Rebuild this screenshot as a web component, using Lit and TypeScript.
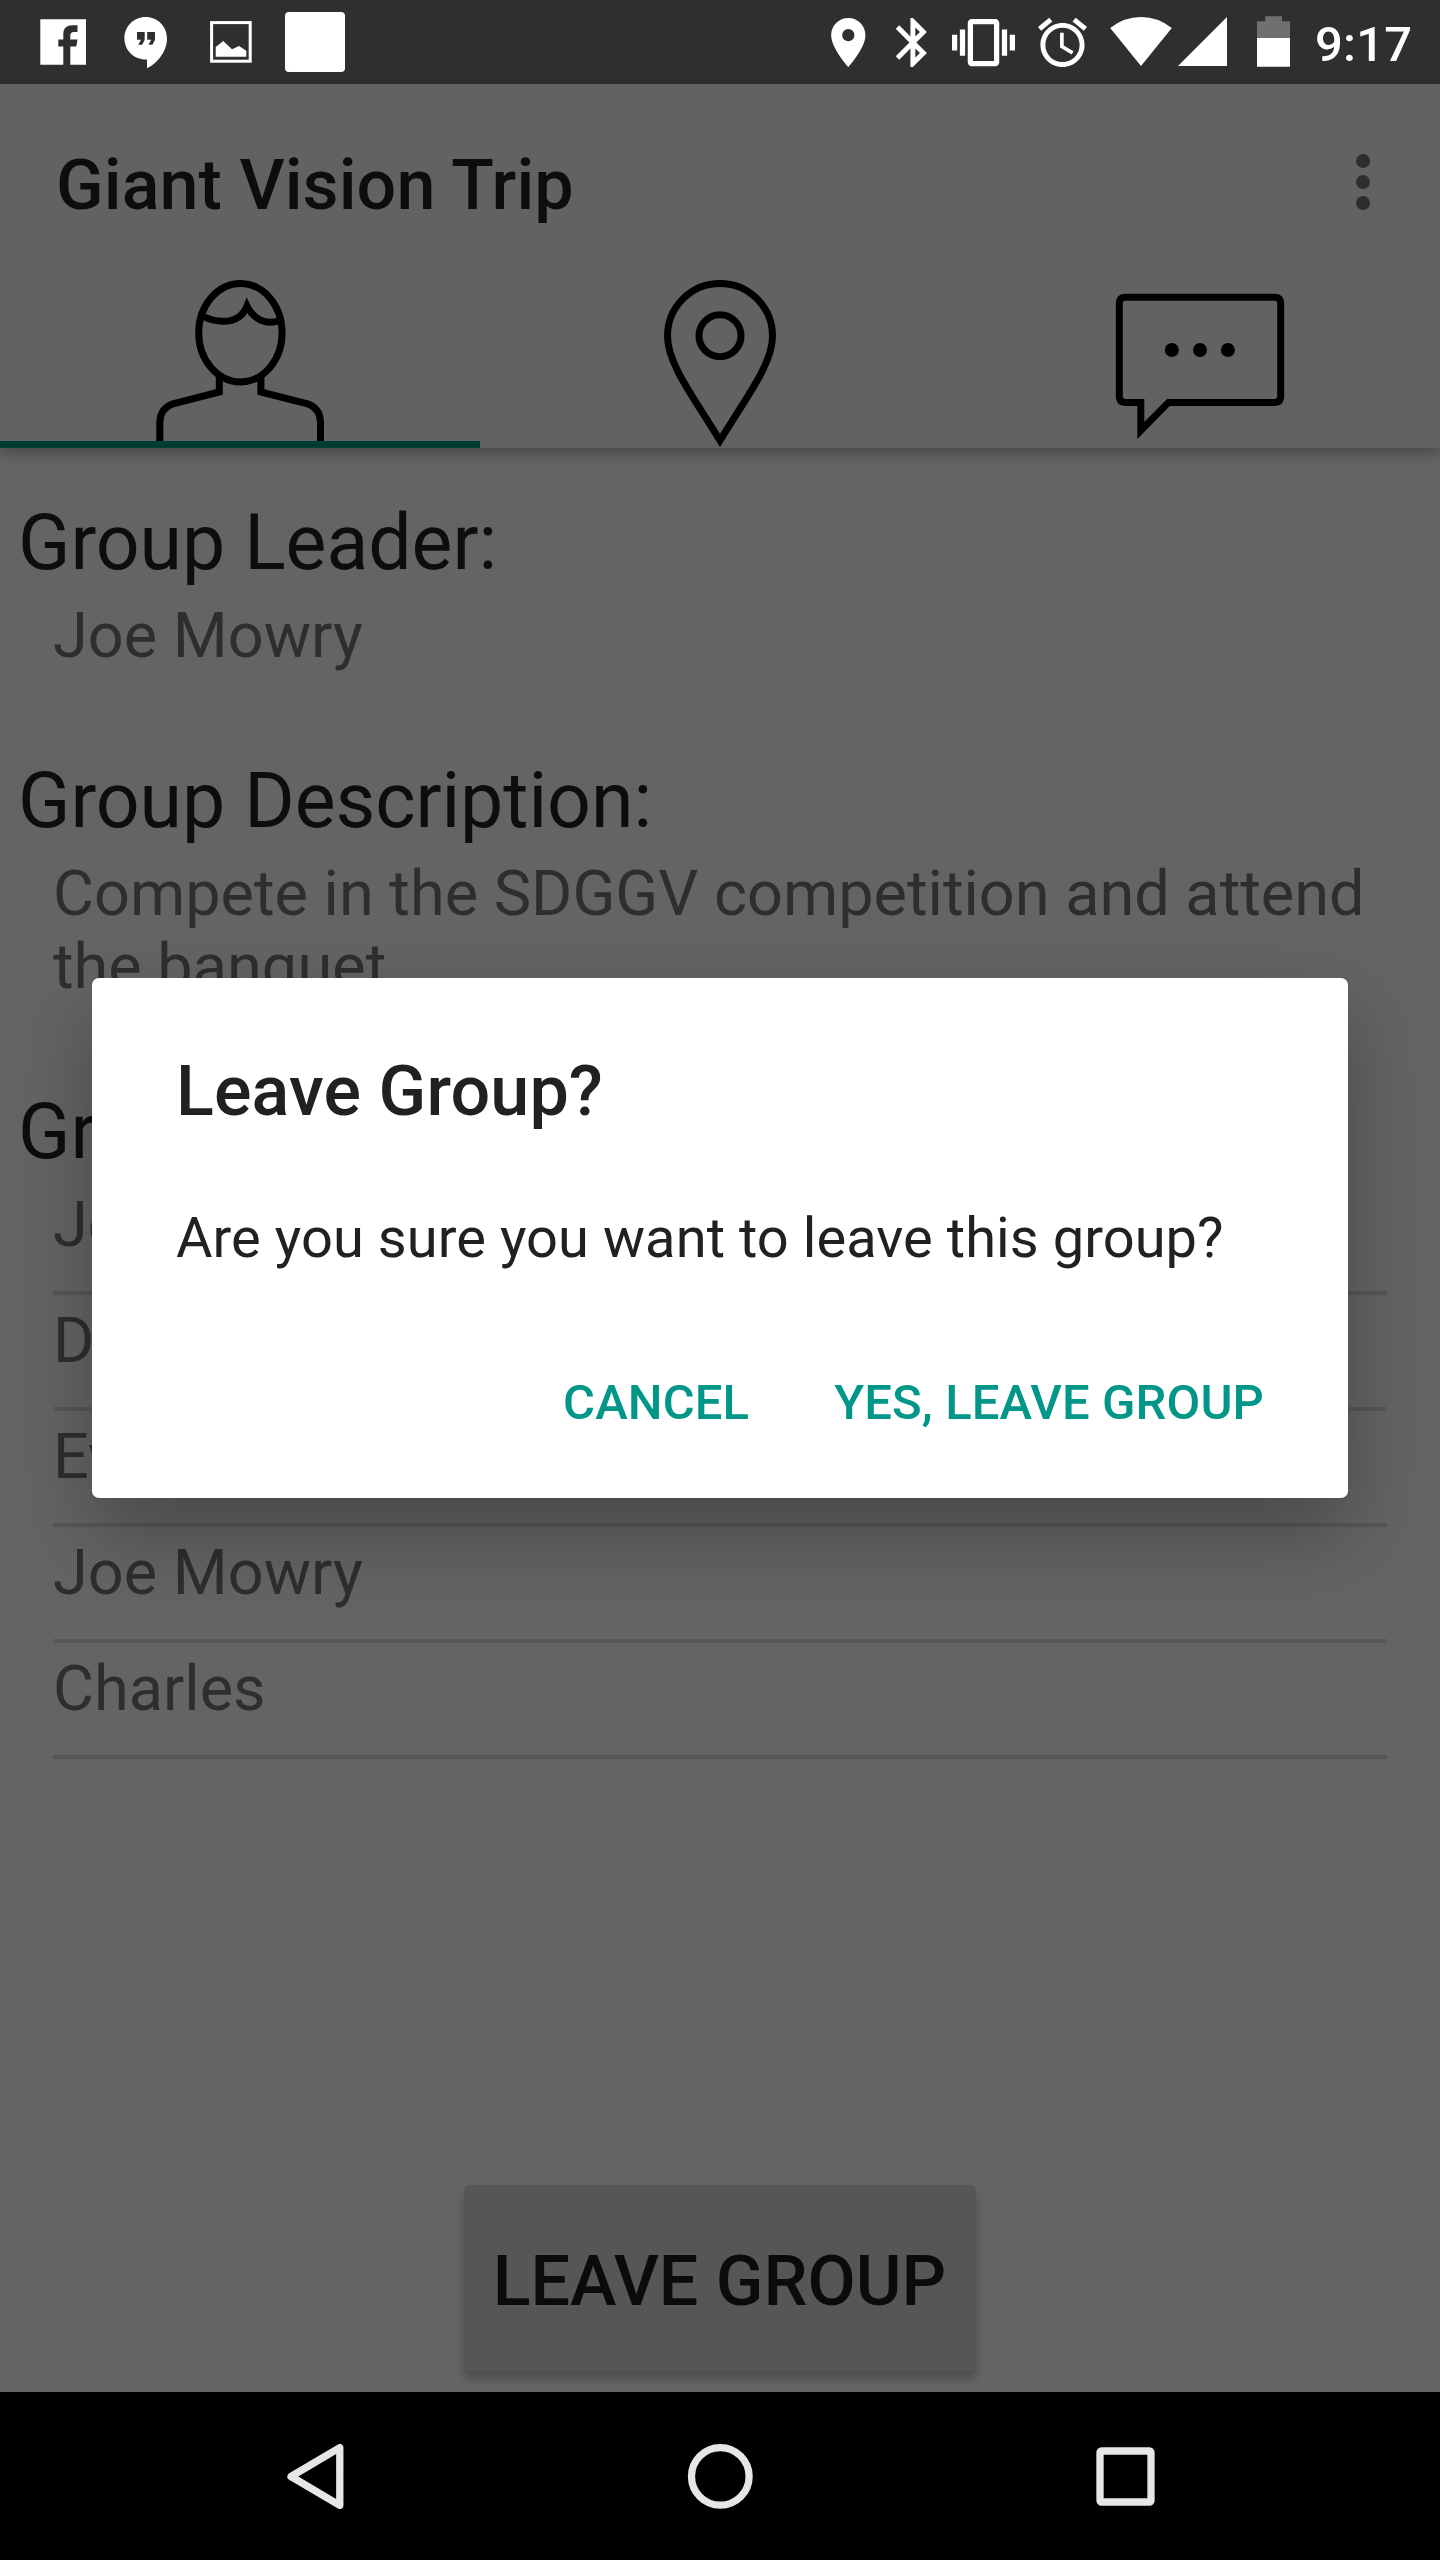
import { LitElement, html, svg, css } from "lit";
import type { SVGTemplateResult } from "lit";
import { customElement } from "lit/decorators.js";
import { classMap } from "lit/directives/class-map.js";

interface StatusIcon {
  name: string;
  x: number;
  width: number;
  art: SVGTemplateResult;
}

const NOTIFICATIONS: StatusIcon[] = [
  {
    name: "facebook", x: 40, width: 46,
    art: svg`<path d="M40.3 19.3H86V64.7H70.3V46.5H76.3L77.5 39.5H70.3V35.5Q70.3 32 74 32H77.5V25.2H72C66 25.2 63.3 29 63.3 34V39.5H58.3V46.5H63.3V64.7H40.3Z"/>`,
  },
  {
    name: "hangouts", x: 124, width: 44,
    art: svg`<path fill-rule="evenodd" d="M145.7 17C157.7 17 167 26.5 167 38.5C167 51.5 157 63.5 147 68.3V59.6H145.7C133.7 59.6 124.4 50 124.4 38.3C124.4 26.5 133.7 17 145.7 17ZM137 32V39.7H141L138.3 44.7H142.2L144.7 39.7V32ZM147.2 32V39.7H151.2L148.5 44.7H152.4L155 39.7V32Z"/>`,
  },
  {
    name: "picture", x: 210, width: 42,
    art: svg`<rect x="211.6" y="22.6" width="38.6" height="38.6" fill="none" stroke="#fff" stroke-width="3"/><path d="M215.7 47L223.3 41L232 49.3L239 46L246.3 50.7V56.7H215.7Z"/>`,
  },
  {
    name: "square", x: 285, width: 60,
    art: svg`<rect x="285" y="12" width="60" height="60" rx="4"/>`,
  },
];

const SYSTEM: StatusIcon[] = [
  {
    name: "location", x: 831, width: 35,
    art: svg`<path transform="translate(818.9 13.1) scale(2.45)" d="M12 2C8.13 2 5 5.13 5 9c0 5.25 7 13 7 13s7-7.75 7-13c0-3.87-3.13-7-7-7zm0 9.5a2.5 2.5 0 1 1 0-5 2.5 2.5 0 0 1 0 5z"/>`,
  },
  {
    name: "bluetooth", x: 895, width: 32,
    art: svg`<path transform="translate(883.5 13.1) scale(2.45)" d="M17.71 7.71L12 2h-1v7.59L6.41 5 5 6.41 10.59 12 5 17.59 6.41 19 11 14.41V22h1l5.71-5.71-4.3-4.29 4.3-4.29zM13 5.83l1.88 1.88L13 9.59V5.83zm1.88 10.46L13 18.17v-3.76l1.88 1.88z"/>`,
  },
  {
    name: "vibrate", x: 952, width: 63,
    art: svg`<path transform="translate(952 11.1) scale(2.625)" d="M0 15h2V9H0v6zm3 2h2V7H3v10zm19-8v6h2V9h-2zm-3 8h2V7h-2v10zM16.5 3h-9C6.67 3 6 3.67 6 4.5v15c0 .83.67 1.5 1.5 1.5h9c.83 0 1.5-.67 1.5-1.5v-15c0-.83-.67-1.5-1.5-1.5zM16 19H8V5h8v14z"/>`,
  },
  {
    name: "alarm", x: 1038, width: 49,
    art: svg`<path transform="translate(1033.1 13.1) scale(2.45)" d="M22 5.72l-4.6-3.86-1.29 1.53 4.6 3.86L22 5.72zM7.88 3.39L6.6 1.86 2 5.71l1.29 1.53 4.59-3.85zM12.5 8H11v6l4.75 2.85.75-1.23-4-2.37V8zM12 4c-4.97 0-9 4.03-9 9s4.02 9 9 9c4.97 0 9-4.03 9-9s-4.03-9-9-9zm0 16c-3.87 0-7-3.13-7-7s3.13-7 7-7 7 3.13 7 7-3.13 7-7 7z"/>`,
  },
  {
    name: "wifi", x: 1110, width: 62,
    art: svg`<path d="M1110.2 28Q1124 17 1141 17T1171.8 28L1141 66Z"/>`,
  },
  {
    name: "signal", x: 1178, width: 49,
    art: svg`<path d="M1178 66L1227 17V66Z"/>`,
  },
  {
    name: "battery", x: 1257, width: 33,
    art: svg`<path fill="#707070" d="M1257 21.3H1265.3V16.2H1282V21.3H1290V39H1257Z"/><path d="M1257 38H1290V66.7H1257Z"/>`,
  },
];

const TABS: { name: string; active: boolean; art: SVGTemplateResult }[] = [
  {
    name: "members", active: true,
    art: svg`
      <ellipse cx="240.4" cy="52.7" rx="41.7" ry="49.2"/>
      <path d="M202.5 36C209 39.5 216 41.3 223.6 41.3C235 41.3 243 36 247 26C251.5 35 259.5 42.3 270.5 42.3Q275 42.3 279.5 40.5"/>
      <path d="M219.3 96V112L173 123.8C164 127 159.8 134 159.8 143V168"/>
      <path d="M260.9 96V112L307.5 123.8C316.5 127 320.5 134 320.5 143V168"/>`,
  },
  {
    name: "map", active: false,
    art: svg`
      <path d="M240 160.5C213 116 187.5 84 187.5 56A52.5 52.5 0 0 1 292.5 56C292.5 84 267 116 240 160.5Z"/>
      <circle cx="240" cy="55.7" r="21"/>`,
  },
  {
    name: "chat", active: false,
    art: svg`
      <path d="M180.8 122.4H165.5Q159.3 122.4 159.3 116.2V23.4Q159.3 17.2 165.5 17.2H314.5Q320.7 17.2 320.7 23.4V116.2Q320.7 122.4 314.5 122.4H208.5L180.8 150.5Z"/>
      <g fill="#000" stroke="none"><circle cx="211.8" cy="70" r="7"/><circle cx="240" cy="70" r="7"/><circle cx="267.9" cy="70" r="7"/></g>`,
  },
];

const MEMBERS = ["John", "David", "Evan", "Joe Mowry", "Charles"];

@customElement("status-bar")
class StatusBar extends LitElement {
  static styles = css`
    :host { display: flex; height: 84px; background: #2f2f2f; color: #fff; }
    .icon { flex: none; display: block; fill: #fff; }
    .time { margin-left: 25px; padding-top: 16px; font-size: 49px; line-height: 57px; font-weight: 500; letter-spacing: 0.2px; }
  `;

  private row(icons: StatusIcon[], start: number) {
    let edge = start;
    return icons.map((icon) => {
      const gap = icon.x - edge;
      edge = icon.x + icon.width;
      return html`<svg class="icon" style="margin-left:${gap}px" width=${icon.width} height="84"
        viewBox="${icon.x} 0 ${icon.width} 84">${icon.art}</svg>`;
    });
  }

  render() {
    return html`${this.row(NOTIFICATIONS, 0)}${this.row(SYSTEM, 345)}<span class="time">9:17</span>`;
  }
}

@customElement("tab-strip")
class TabStrip extends LitElement {
  static styles = css`
    :host { display: grid; grid-template-columns: repeat(3, 1fr); height: 168px; }
    .tab { display: block; height: 168px; box-sizing: border-box; overflow: hidden; }
    .active { border-bottom: 7px solid #003c36; }
    .art { display: block; fill: none; stroke: #000; stroke-width: 7; stroke-miterlimit: 10; }
  `;

  render() {
    return TABS.map(
      (tab) => html`<div class=${classMap({ tab: true, active: tab.active })}>
        <svg class="art" width="480" height="168" viewBox="0 0 480 168">${tab.art}</svg>
      </div>`
    );
  }
}

@customElement("group-details")
class GroupDetails extends LitElement {
  static styles = css`
    :host { display: flex; flex-direction: column; padding-top: 50px; box-sizing: border-box; }
    .section { margin-bottom: 84px; }
    .section.text { margin-bottom: 84px; }
    .heading { padding-left: 18px; font-size: 77px; line-height: 90px; letter-spacing: -0.05px; color: #0d0d0d; }
    .body { margin: 11px 52px 0 53px; font-size: 63px; line-height: 73px; color: #2e2e2e; }
    .members { margin: 2px 53px 0; padding: 0; list-style: none; font-size: 63px; line-height: 73px; color: #2e2e2e; }
    .member { height: 116px; box-sizing: border-box; padding-top: 9px; border-bottom: 4px solid #575757; }
    .leave {
      align-self: center; margin-top: auto; margin-bottom: 21px; width: 512px; height: 186px; box-sizing: border-box;
      margin-right: 1px; padding-top: 55px; text-align: center; font-size: 70px; line-height: 82px; font-weight: 500; color: #0b0b0b;
      background: #565656; border-radius: 7px; box-shadow: 0 8px 8px rgba(0, 0, 0, 0.22);
    }
  `;

  render() {
    return html`
      <div class="section">
        <div class="heading">Group Leader:</div>
        <div class="body">Joe Mowry</div>
      </div>
      <div class="section text">
        <div class="heading">Group Description:</div>
        <div class="body">Compete in the SDGGV competition and attend the banquet</div>
      </div>
      <div class="heading">Group Members:</div>
      <ul class="members">
        ${MEMBERS.map((name) => html`<li class="member">${name}</li>`)}
      </ul>
      <div class="leave">LEAVE GROUP</div>
    `;
  }
}

@customElement("confirm-dialog")
class ConfirmDialog extends LitElement {
  static styles = css`
    :host {
      display: block; box-sizing: border-box; width: 1256px; height: 520px; padding: 72px 84px 0; white-space: nowrap;
      background: #fff; color: #212121; border-radius: 7px; box-shadow: 0 35px 80px rgba(0, 0, 0, 0.28);
    }
    .title { font-size: 70px; line-height: 82px; font-weight: 500; letter-spacing: 0.15px; }
    .message { margin-top: 73px; font-size: 56px; line-height: 66px; letter-spacing: 0.06px; }
    .actions { display: flex; justify-content: flex-end; gap: 85px; margin-top: 103px; font-size: 49px; line-height: 57px; font-weight: 500; letter-spacing: 0.12px; color: #009688; }
  `;

  render() {
    return html`
      <div class="title">Leave Group?</div>
      <div class="message">Are you sure you want to leave this group?</div>
      <div class="actions"><span>CANCEL</span><span>YES, LEAVE GROUP</span></div>
    `;
  }
}

@customElement("nav-bar")
class NavBar extends LitElement {
  static styles = css`
    :host {
      display: grid; grid-template-columns: repeat(3, 405px); justify-content: center; place-items: center;
      height: 168px; background: #000;
    }
    .key { display: block; fill: none; stroke: #e6e6e6; stroke-width: 7.3; stroke-linejoin: round; }
  `;

  render() {
    return html`
      <svg class="key" width="80" height="80" viewBox="0 0 80 80"><path d="M64.8 11.7V69.3L16 40.5Z"/></svg>
      <svg class="key" width="80" height="80" viewBox="0 0 80 80"><circle cx="40.3" cy="40.4" r="28.8"/></svg>
      <svg class="key" width="80" height="80" viewBox="0 0 80 80"><rect x="15" y="15" width="51" height="51" rx="1.5"/></svg>
    `;
  }
}

@customElement("app-root")
class AppRoot extends LitElement {
  static styles = css`
    :host {
      display: flex; flex-direction: column; position: relative; width: 1440px; height: 2560px; overflow: hidden;
      background: #646464; font-family: Roboto, sans-serif;
    }
    .header { position: relative; z-index: 1; background: #626262; box-shadow: 0 6px 12px rgba(0, 0, 0, 0.25); }
    .bar { display: flex; justify-content: space-between; height: 196px; box-sizing: border-box; padding: 60px 66px 0 56px; }
    .title { font-size: 70px; line-height: 82px; font-weight: 500; letter-spacing: 0.08px; color: #0d0d0d; }
    .more { display: block; margin-top: 3px; fill: #2e2e2e; }
    .content { flex: 1; }
    .dialog { position: absolute; z-index: 2; left: 92px; top: 978px; }
  `;

  render() {
    return html`
      <status-bar></status-bar>
      <div class="header">
        <div class="bar">
          <div class="title">Giant Vision Trip</div>
          <svg class="more" width="22" height="70" viewBox="0 0 22 70">
            ${[14, 35, 56].map((y) => svg`<circle cx="11" cy=${y} r="7"/>`)}
          </svg>
        </div>
        <tab-strip></tab-strip>
      </div>
      <group-details class="content"></group-details>
      <nav-bar></nav-bar>
      <confirm-dialog class="dialog"></confirm-dialog>
    `;
  }
}
